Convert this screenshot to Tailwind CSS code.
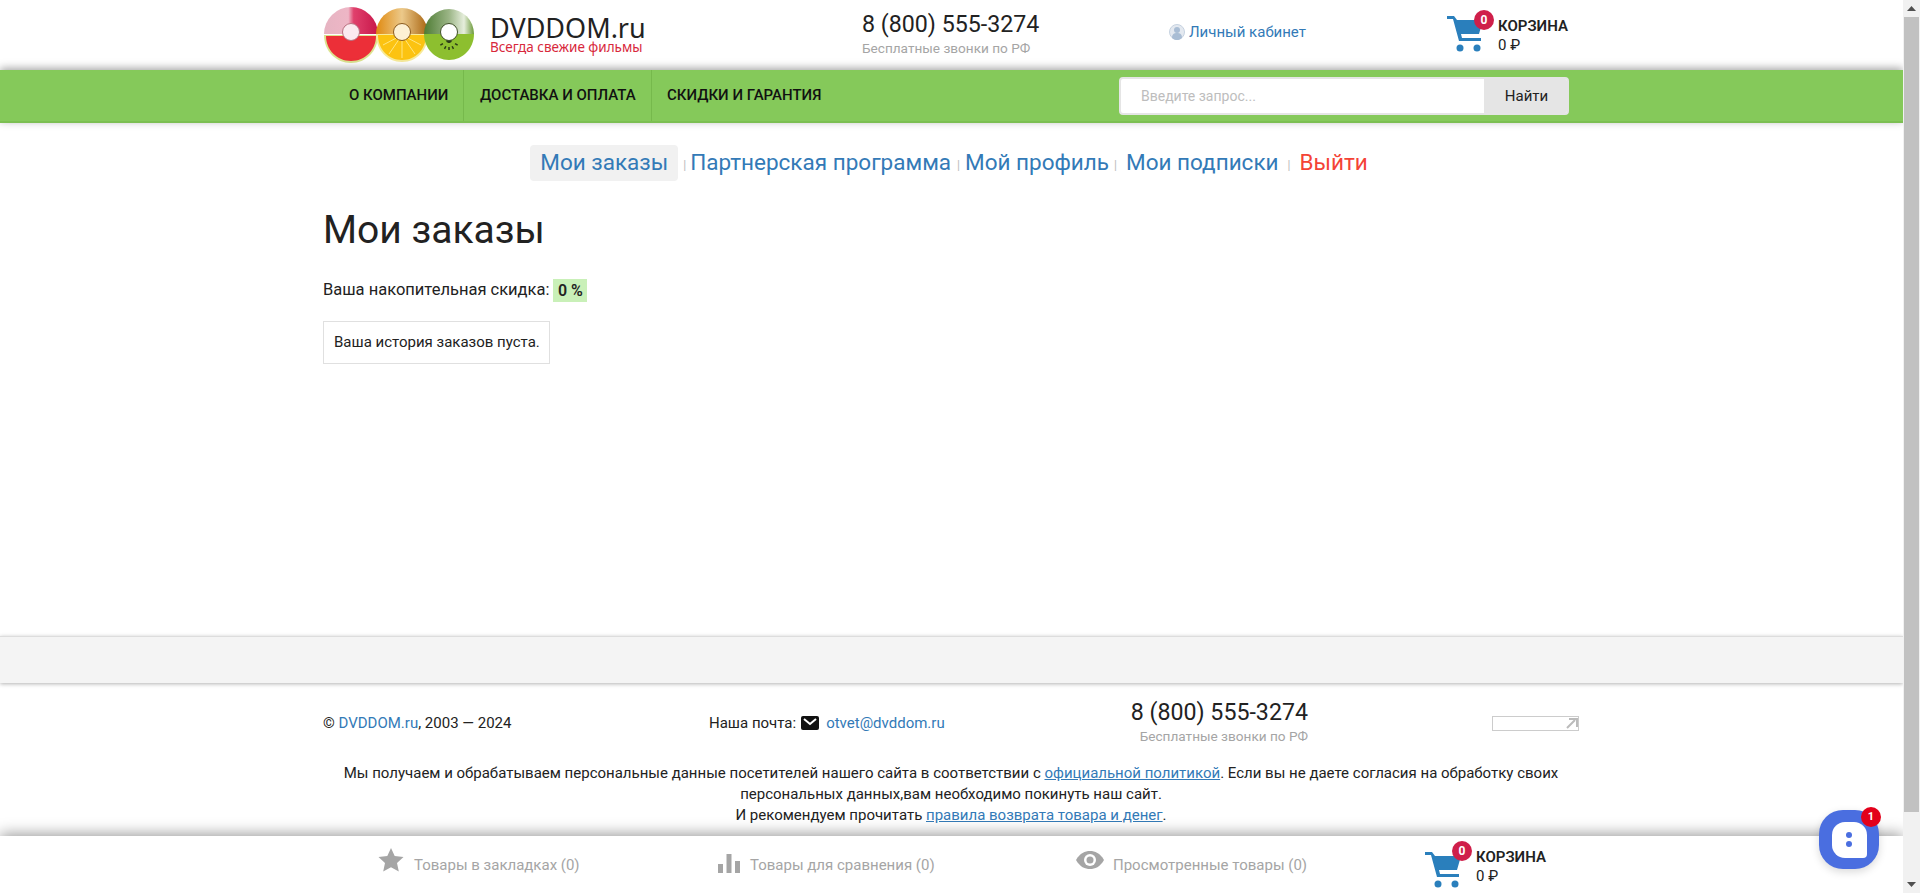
<!DOCTYPE html>
<html lang="ru">
<head>
    <meta charset="UTF-8">
    <meta name="viewport" content="width=device-width, initial-scale=1.0">
    <script src="https://cdn.jsdelivr.net/npm/@tailwindcss/browser@4"></script>
    <title>Мои заказы</title>
</head>
<body class="h-screen overflow-hidden flex font-['Roboto',sans-serif] text-[15px] text-[#222] bg-white">
    <div class="relative w-[1903px] h-full overflow-hidden">

        <!-- header -->
        <header class="h-[70px] bg-white">
            <div class="w-[1257px] mx-auto h-full flex">
                <div class="w-[167px] pt-[7px]">
                    <svg width="152" height="57" viewBox="0 0 152 57">
                        <defs>
                            <linearGradient id="red" x1="0" y1="0" x2="1" y2="0"><stop offset="0" stop-color="#e6b4c2"/><stop offset="0.45" stop-color="#eeb6c6"/><stop offset="0.55" stop-color="#e0406c"/><stop offset="1" stop-color="#c8174a"/></linearGradient>
                            <linearGradient id="orange" x1="0" y1="0" x2="1" y2="0"><stop offset="0" stop-color="#e08a10"/><stop offset="0.5" stop-color="#ecc98a"/><stop offset="1" stop-color="#a86410"/></linearGradient>
                            <linearGradient id="kiwi" x1="0" y1="0" x2="1" y2="0"><stop offset="0" stop-color="#4e7c34"/><stop offset="0.5" stop-color="#9bb586"/><stop offset="0.8" stop-color="#e6eedc"/><stop offset="1" stop-color="#6c9a3a"/></linearGradient>
                        </defs>
                        <path d="M1 27a27 27 0 0 1 54 0z" fill="url(#red)"/>
                        <path d="M1 28h54c0 16-12 28-27 28S1 44 1 28z" fill="#dbe38e"/>
                        <path d="M3 29h50c0 14-11 25-25 25S3 43 3 29z" fill="#ec2f38"/>
                        <circle cx="28" cy="25" r="8.500" fill="#fbeaf0" stroke="#b9707f" stroke-width="1"/>
                        <path d="M53 27a26 26 0 0 1 52 0z" fill="url(#orange)"/>
                        <path d="M53 27h52c0 16-11 28-26 28S53 43 53 27z" fill="#f7ea98"/>
                        <path d="M55 28h48c0 14-10 25-24 25S55 42 55 28z" fill="#fcc311"/>
                        <path d="M79 28L66 47M79 28L79 51M79 28L92 47M79 28L60 38M79 28L98 38" stroke="#ffe680" stroke-width="1"/>
                        <circle cx="79" cy="25" r="8.500" fill="#fdf1d4" stroke="#8a5a1c" stroke-width="1"/>
                        <path d="M101 27a25 25 0 0 1 50 0z" fill="url(#kiwi)"/>
                        <path d="M101 27h50c0 14-11 26-25 26S101 41 101 27z" fill="#8dbf2f"/>
                        <path d="M126 33L114 40M126 33L120 45M126 33L126 47M126 33L132 45M126 33L138 40" stroke="#2c3a18" stroke-width="1.500" stroke-dasharray="3 4"/>
                        <circle cx="126" cy="25" r="8.500" fill="#fff" stroke="#3f5028" stroke-width="1"/>
                    </svg>
                </div>
                <div class="w-[371px] pt-[13px]">
                    <div class="font-['Noto_Sans',sans-serif] text-[27px] leading-[29px] text-[#222]">DVDDOM.ru</div>
                    <div class="font-['Noto_Sans',sans-serif] text-[13.5px] leading-[11px] text-[#d8283c]">Всегда свежие фильмы</div>
                </div>
                <div class="w-[307px] pt-[9px] pl-[1px]">
                    <div class="text-[23.200px] leading-[30px] text-[#222]">8 (800) 555-3274</div>
                    <div class="text-[13.600px] leading-[18px] text-[#a5a5a5]">Бесплатные звонки по РФ</div>
                </div>
                <div class="w-[279px] pt-[22px] pl-[1px] flex items-start gap-[4px]">
                    <svg class="w-[16px] h-[16px] mt-[2px]" viewBox="0 0 16 16">
                        <circle cx="8" cy="8" r="7.500" fill="#e4e9f0" stroke="#c6d2e0"/>
                        <circle cx="8" cy="6" r="3" fill="#a9bdd4"/>
                        <path d="M3 14c0-4 2-5 5-5s5 1 5 5a7 7 0 0 1-10 0z" fill="#a9bdd4"/>
                    </svg>
                    <a class="text-[15px] leading-[20px] text-[#337ab7]" href="#">Личный кабинет</a>
                </div>
                <div class="relative pt-[13px] flex">
                    <svg class="w-[38px] h-[40px]" viewBox="0 0 38 40">
                        <path d="M0 3h7l3 4h26l-4 14H14l1 4h19v3H12L6 6H0z" fill="#2a7fbc"/>
                        <circle cx="13" cy="35" r="3.500" fill="#2a7fbc"/>
                        <circle cx="30" cy="35" r="3.500" fill="#2a7fbc"/>
                    </svg>
                    <span class="absolute left-[27px] top-[10px] w-[20px] h-[20px] rounded-full bg-[#cf1f4a] text-white text-[12px] font-bold leading-[20px] text-center">0</span>
                    <div class="ml-[13px] mt-[3px]">
                        <div class="text-[15px] leading-[20px] font-semibold text-[#222]">КОРЗИНА</div>
                        <div class="text-[15px] leading-[18px] text-[#222]">0 ₽</div>
                    </div>
                </div>
            </div>
        </header>

        <!-- nav -->
        <nav class="relative h-[53px] bg-[#85c95a] border-b-2 border-b-[#7cbf52] shadow-[0_-2px_8px_rgba(0,0,0,0.35)]">
            <div class="w-[1257px] mx-auto h-full flex items-stretch">
                <a href="#" class="w-[141px] pl-[26px] flex items-center border-r border-[#76b94c] text-[15px] font-medium text-[#111]">О КОМПАНИИ</a>
                <a href="#" class="w-[188px] pl-[16px] flex items-center border-r border-[#76b94c] text-[15px] font-medium text-[#111]">ДОСТАВКА И ОПЛАТА</a>
                <a href="#" class="w-[467px] pl-[15px] flex items-center text-[15px] font-medium text-[#111]">СКИДКИ И ГАРАНТИЯ</a>
                <div class="w-[450px] h-[38px] mt-[7px] flex rounded-[4px] overflow-hidden border-2 border-[#e5e5e5] bg-white">
                    <div class="flex-1 pl-[20px] text-[14px] leading-[34px] text-[#bdbdbd]">Введите запрос...</div>
                    <div class="w-[85px] -mr-[2px] bg-[#e5e5e5] text-[15px] leading-[34px] text-center text-[#222]">Найти</div>
                </div>
            </div>
        </nav>

        <!-- account tabs -->
        <div class="mt-[22px] flex justify-center items-center h-[36px] pr-[5px] text-[22.500px] text-[#337ab7]">
            <a href="#" class="h-[36px] px-[10px] leading-[35px] rounded-[4px] bg-[#f1f1f1]">Мои заказы</a>
            <span class="text-[12px] text-[#bbb] ml-[5px] mr-[4px] mt-[4px]">|</span>
            <a href="#">Партнерская программа</a>
            <span class="text-[12px] text-[#bbb] ml-[6px] mr-[5px] mt-[4px]">|</span>
            <a href="#">Мой профиль</a>
            <span class="text-[12px] text-[#bbb] ml-[5px] mr-[9px] mt-[4px]">|</span>
            <a href="#">Мои подписки</a>
            <span class="text-[12px] text-[#bbb] mx-[9px] mt-[4px]">|</span>
            <a href="#" class="text-[#f44336]">Выйти</a>
        </div>

        <main class="w-[1257px] mx-auto h-[431px]">
            <h1 class="mt-[24px] text-[39px] leading-[50px] text-[#222]">Мои заказы</h1>
            <div class="mt-[23px] text-[16.500px] leading-[24px] flex items-center">
                Ваша накопительная скидка:
                <span class="ml-[4px] px-[4.500px] h-[23px] leading-[23px] text-[16px] bg-[#c9f0b8] font-semibold">0 %</span>
            </div>
            <div class="mt-[19px] w-[227px] h-[43px] border border-[#e0e0e0] text-[15px] leading-[41px] pl-[10px]">Ваша история заказов пуста.</div>
        </main>

        <!-- footer band -->
        <div class="h-[47px] bg-[#f4f4f4] border-t border-[#ddd] shadow-[0_1px_4px_rgba(0,0,0,0.3)]"></div>

        <footer class="w-[1257px] mx-auto relative">
            <div class="h-[82px] flex">
                <div class="w-[386px] pt-[29px] leading-[22px]">© <a href="#" class="text-[#337ab7]">DVDDOM.ru</a>, 2003 — 2024</div>
                <div class="w-[421px] pt-[29px] leading-[22px] flex items-start">
                    Наша почта:
                    <svg class="w-[18px] h-[18px] ml-[5px] mt-[2px]" viewBox="0 0 18 18">
                        <rect y="2" width="18" height="14" rx="2" fill="#111"/>
                        <path d="M3 5l6 5 6-5" fill="none" stroke="#fff" stroke-width="2"/>
                    </svg>
                    <a href="#" class="ml-[7px] text-[#337ab7]">otvet@dvddom.ru</a>
                </div>
                <div class="w-[363px] pt-[14px] text-right pr-[185px] whitespace-nowrap">
                    <div class="text-[23.200px] leading-[30px]">8 (800) 555-3274</div>
                    <div class="text-[13.600px] leading-[18px] text-[#a5a5a5]">Бесплатные звонки по РФ</div>
                </div>
                <div class="w-[87px] h-[15px] mt-[33px] -ml-[1px] border border-[#ccc] flex justify-end">
                    <svg class="w-[13px] h-[13px]" viewBox="0 0 13 13">
                        <path d="M2 11L10 3M4 2h8v8" fill="none" stroke="#bbb" stroke-width="2"/>
                    </svg>
                </div>
            </div>
            <p class="mt-[-2px] w-[1257px] text-center leading-[20.800px] pr-[1px]">
                Мы получаем и обрабатываем персональные данные посетителей нашего сайта в соответствии с <a href="#" class="text-[#337ab7] underline">официальной политикой</a>. Если вы не даете согласия на обработку своих<br>
                персональных данных,вам необходимо покинуть наш сайт.<br>
                И рекомендуем прочитать <a href="#" class="text-[#337ab7] underline">правила возврата товара и денег</a>.
            </p>
        </footer>

        <!-- fixed bottom bar -->
        <div class="absolute left-0 right-0 bottom-0 h-[57px] bg-white z-10 shadow-[0_-2px_14px_rgba(0,0,0,0.4)]">
            <div class="w-[1257px] mx-auto h-full flex text-[#a5a5a5]">
                <div class="w-[393px] pl-[55px] pt-[11px] flex items-start">
                    <svg class="w-[26px] h-[26px]" viewBox="0 0 26 26">
                        <path d="M13 1l3.700 8 8.800 1-6.500 6 1.800 8.600L13 20.200 5.200 24.600 7 16 .5 10l8.800-1z" fill="#a5a5a5"/>
                    </svg>
                    <span class="ml-[10px] mt-[8px] leading-[20px]">Товары в закладках (0)</span>
                </div>
                <div class="w-[360px] pl-[1px] pt-[16px] flex items-start">
                    <svg class="w-[24px] h-[22px]" viewBox="0 0 24 22">
                        <path d="M1 12h5v9H1zM9.500 2h5v19h-5zM18 9h5v12h-5z" fill="#a5a5a5"/>
                    </svg>
                    <span class="ml-[9px] mt-[3px] leading-[20px]">Товары для сравнения (0)</span>
                </div>
                <div class="w-[349px] pt-[14px] flex items-start">
                    <svg class="w-[28px] h-[20px]" viewBox="0 0 28 20">
                        <path d="M0 10C4 3 9 1 14 1s10 2 14 9c-4 7-9 9-14 9S4 17 0 10z" fill="#a5a5a5"/>
                        <circle cx="14" cy="10" r="6" fill="#fff"/>
                        <circle cx="14" cy="10" r="3.500" fill="#a5a5a5"/>
                    </svg>
                    <span class="ml-[9px] mt-[5px] leading-[20px]">Просмотренные товары (0)</span>
                </div>
                <div class="relative pt-[13px] flex">
                    <svg class="w-[38px] h-[40px]" viewBox="0 0 38 40">
                        <path d="M0 3h7l3 4h26l-4 14H14l1 4h19v3H12L6 6H0z" fill="#2a7fbc"/>
                        <circle cx="13" cy="35" r="3.500" fill="#2a7fbc"/>
                        <circle cx="30" cy="35" r="3.500" fill="#2a7fbc"/>
                    </svg>
                    <span class="absolute left-[27px] top-[5px] w-[20px] h-[20px] rounded-full bg-[#cf1f4a] text-white text-[12px] font-bold leading-[20px] text-center">0</span>
                    <div class="ml-[13px] -mt-[2px] text-[#222]">
                        <div class="text-[15px] leading-[20px] font-semibold">КОРЗИНА</div>
                        <div class="text-[15px] leading-[18px]">0 ₽</div>
                    </div>
                </div>
            </div>
        </div>

        <!-- chat widget -->
        <div class="absolute left-[1819px] top-[810px] w-[60px] h-[59px] z-20 rounded-[24px] bg-[#4a6ee0] shadow-[0_3px_8px_rgba(0,0,0,0.15)] flex items-center justify-center">
            <div class="w-[35px] h-[36px] rounded-[13px] rounded-br-[4px] bg-white flex flex-col items-center justify-center gap-[3px]">
                <span class="w-[6px] h-[6px] rounded-full bg-[#4a6ee0]"></span>
                <span class="w-[6px] h-[6px] rounded-full bg-[#4a6ee0]"></span>
            </div>
            <span class="absolute -right-[2px] -top-[3px] w-[20px] h-[20px] rounded-full bg-[#e3001b] text-white text-[11px] font-bold leading-[20px] text-center">1</span>
        </div>
    </div>

    <!-- scrollbar -->
    <div class="w-[17px] h-full bg-[#f1f1f1] flex flex-col items-center">
        <svg class="w-[17px] h-[17px]" viewBox="0 0 17 17"><path d="M8.500 6l4.500 5H4z" fill="#505050"/></svg>
        <div class="w-[15px] h-[795px] bg-[#c1c1c1]"></div>
        <div class="flex-1"></div>
        <svg class="w-[17px] h-[17px]" viewBox="0 0 17 17"><path d="M8.500 11L4 6h9z" fill="#505050"/></svg>
    </div>
</body>
</html>
